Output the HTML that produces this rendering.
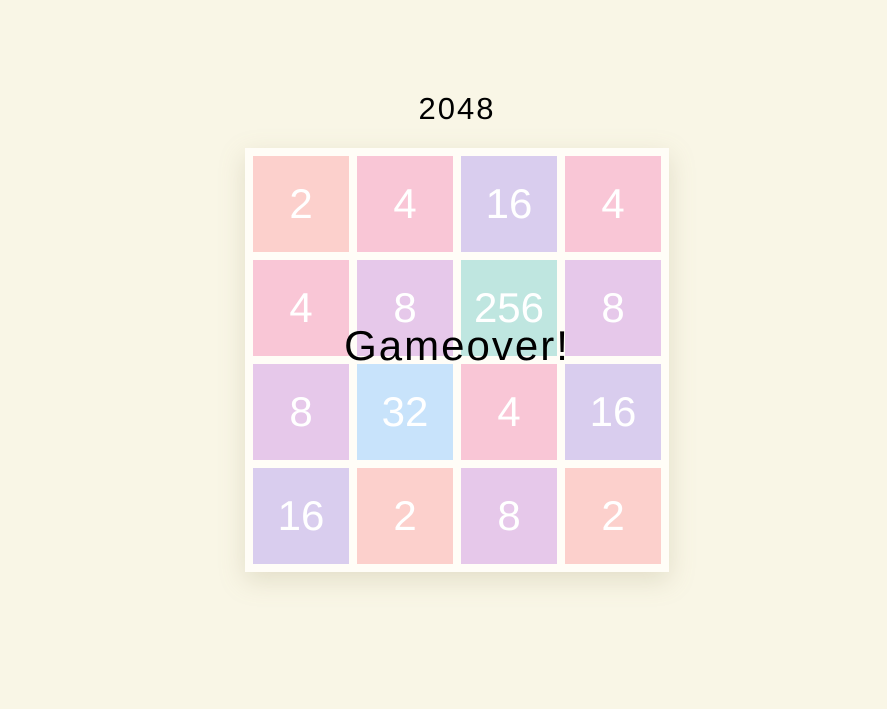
<!DOCTYPE html>
<html><head><meta charset="utf-8"><style>
html,body{margin:0;padding:0;width:887px;height:709px;background:#f9f6e6;font-family:"Liberation Sans",sans-serif;overflow:hidden;position:relative}
.title{position:absolute;left:0;width:914px;top:91px;text-align:center;font-size:31px;letter-spacing:2px;color:#000;line-height:36px}
.board{position:absolute;left:245px;top:148px;width:424px;height:424px;background:#fffdf7;box-shadow:0 8px 24px rgba(160,150,110,0.25)}
.t{position:absolute;width:96px;height:96px;color:#fff;font-size:42px;text-align:center;line-height:96px}
.go{position:absolute;left:0;width:914px;top:322px;text-align:center;font-size:42px;letter-spacing:2px;color:#000;line-height:48px}
</style></head><body>
<div class="title">2048</div>
<div class="board">
<div class="t" style="left:8px;top:8px;background:#fcd0cc">2</div>
<div class="t" style="left:112px;top:8px;background:#f9c6d6">4</div>
<div class="t" style="left:216px;top:8px;background:#d9cdee">16</div>
<div class="t" style="left:320px;top:8px;background:#f9c6d6">4</div>
<div class="t" style="left:8px;top:112px;background:#f9c6d6">4</div>
<div class="t" style="left:112px;top:112px;background:#e6c8ea">8</div>
<div class="t" style="left:216px;top:112px;background:#bfe6e0">256</div>
<div class="t" style="left:320px;top:112px;background:#e6c8ea">8</div>
<div class="t" style="left:8px;top:216px;background:#e6c8ea">8</div>
<div class="t" style="left:112px;top:216px;background:#c8e3fb">32</div>
<div class="t" style="left:216px;top:216px;background:#f9c6d6">4</div>
<div class="t" style="left:320px;top:216px;background:#d9cdee">16</div>
<div class="t" style="left:8px;top:320px;background:#d9cdee">16</div>
<div class="t" style="left:112px;top:320px;background:#fcd0cc">2</div>
<div class="t" style="left:216px;top:320px;background:#e6c8ea">8</div>
<div class="t" style="left:320px;top:320px;background:#fcd0cc">2</div>
</div>
<div class="go">Gameover!</div>
</body></html>
